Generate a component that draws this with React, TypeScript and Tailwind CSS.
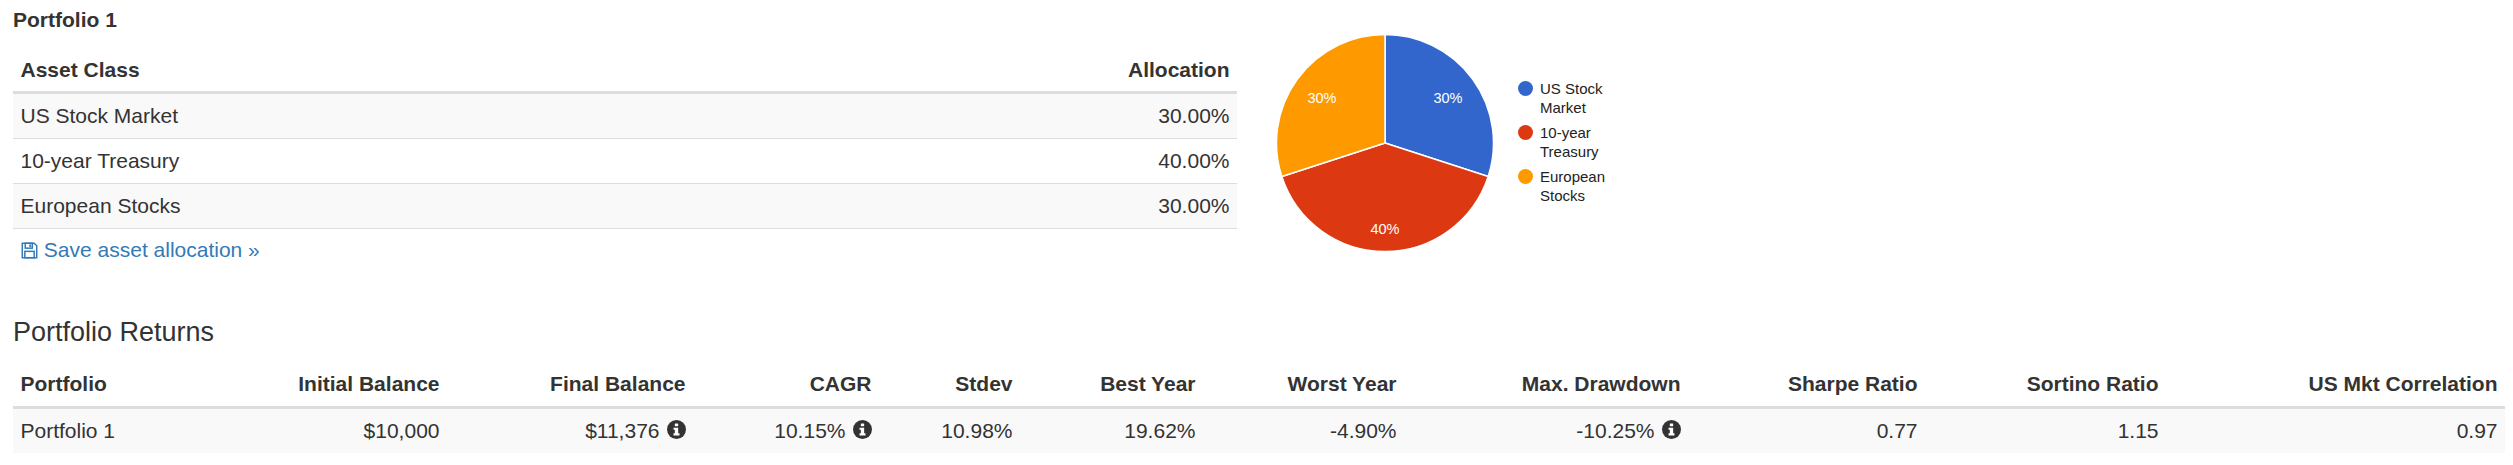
const allocation = [
  { name: 'US Stock Market', pct: '30.00%' },
  { name: '10-year Treasury', pct: '40.00%' },
  { name: 'European Stocks', pct: '30.00%' },
]

const legend = [
  { label: 'US Stock Market', color: 'bg-[#3366cc]' },
  { label: '10-year Treasury', color: 'bg-[#dc3912]' },
  { label: 'European Stocks', color: 'bg-[#ff9900]' },
]

const columns = [
  { title: 'Portfolio', width: 'w-[200px]', align: 'text-left' },
  { title: 'Initial Balance', width: 'w-[234px]', align: 'text-right' },
  { title: 'Final Balance', width: 'w-[246px]', align: 'text-right' },
  { title: 'CAGR', width: 'w-[186px]', align: 'text-right' },
  { title: 'Stdev', width: 'w-[141px]', align: 'text-right' },
  { title: 'Best Year', width: 'w-[183px]', align: 'text-right' },
  { title: 'Worst Year', width: 'w-[201px]', align: 'text-right' },
  { title: 'Max. Drawdown', width: 'w-[284px]', align: 'text-right' },
  { title: 'Sharpe Ratio', width: 'w-[237px]', align: 'text-right' },
  { title: 'Sortino Ratio', width: 'w-[241px]', align: 'text-right' },
  { title: 'US Mkt Correlation', width: 'w-auto', align: 'text-right' },
]

const results = [
  { value: 'Portfolio 1' },
  { value: '$10,000' },
  { value: '$11,376', info: true },
  { value: '10.15%', info: true },
  { value: '10.98%' },
  { value: '19.62%' },
  { value: '-4.90%' },
  { value: '-10.25%', info: true },
  { value: '0.77' },
  { value: '1.15' },
  { value: '0.97' },
]

function InfoIcon() {
  return (
    <svg viewBox="0 0 16 16" className="ml-[7px] inline-block h-[19px] w-[19px] align-[-1px]">
      <circle cx="8" cy="8" r="8" fill="#333" />
      <rect x="6.6" y="2.9" width="2.8" height="2.3" rx="0.4" fill="#fff" />
      <path d="M5.5 6.5H9.4V11.2H10.5V13H5.5V11.2H6.6V8.2H5.5Z" fill="#fff" />
    </svg>
  )
}

function FloppyIcon() {
  return (
    <svg viewBox="0 0 16 16" className="inline-block h-[17px] w-[17px] align-[-2px]" fill="none" stroke="#337ab7" strokeWidth="1.4">
      <path d="M1.2 1.2H12.4L14.8 3.6V14.8H1.2Z" />
      <rect x="4" y="1.2" width="6.6" height="4.6" />
      <rect x="7.8" y="2.3" width="1.6" height="2.4" fill="#337ab7" stroke="none" />
      <rect x="3.6" y="8.8" width="8.8" height="6" />
    </svg>
  )
}

function Pie() {
  return (
    <svg width="218" height="218" viewBox="0 0 218 218" className="shrink-0">
      <path d="M109 109L109 0.5A108.5 108.5 0 0 1 212.19 142.53Z" fill="#3366cc" stroke="#fff" strokeWidth="1.5" />
      <path d="M109 109L212.19 142.53A108.5 108.5 0 0 1 5.81 142.53Z" fill="#dc3912" stroke="#fff" strokeWidth="1.5" />
      <path d="M109 109L5.81 142.53A108.5 108.5 0 0 1 109 0.5Z" fill="#ff9900" stroke="#fff" strokeWidth="1.5" />
      <g fill="#fff" fontSize="14.5" textAnchor="middle" fontFamily="Liberation Sans, Arial, sans-serif">
        <text x="172" y="69">30%</text>
        <text x="109" y="200">40%</text>
        <text x="46" y="69">30%</text>
      </g>
    </svg>
  )
}

export default function App() {
  return (
    <div className="h-[465px] w-[2513px] bg-white pl-[13px] font-['Liberation_Sans',Arial,sans-serif] text-[21px] leading-[30px] text-[#333]">
      <div className="flex">
        <div className="w-[1224px] shrink-0">
          <div className="pt-[5px] font-bold">Portfolio 1</div>
          <table className="mt-[13px] w-full border-separate border-spacing-0">
            <thead>
              <tr>
                <th className="border-b-[3px] border-[#ddd] px-[7.5px] pt-[7px] pb-[6px] text-left font-bold">Asset Class</th>
                <th className="border-b-[3px] border-[#ddd] px-[7.5px] pt-[7px] pb-[6px] text-right font-bold">Allocation</th>
              </tr>
            </thead>
            <tbody>
              {allocation.map((row, i) => (
                <tr key={row.name} className={i % 2 === 0 ? 'bg-[#f9f9f9]' : 'bg-white'}>
                  <td className="border-b border-[#ddd] px-[7.5px] py-[7px]">{row.name}</td>
                  <td className="border-b border-[#ddd] px-[7.5px] py-[7px] text-right">{row.pct}</td>
                </tr>
              ))}
            </tbody>
          </table>
          <p className="pt-[6px] pl-[8px]">
            <a href="#" className="text-[#337ab7]">
              <FloppyIcon /> Save asset allocation »
            </a>
          </p>
        </div>
        <div className="flex items-start pt-[34px] pl-[39px]">
          <Pie />
          <div className="ml-[24px] mt-[45px] flex flex-col gap-[6px] text-[15px] leading-[19px] text-[#222]">
            {legend.map((item) => (
              <div key={item.label} className="flex items-start">
                <span className={`mt-[2px] h-[15px] w-[15px] shrink-0 rounded-full ${item.color}`} />
                <span className="ml-[7px] w-[72px]">{item.label}</span>
              </div>
            ))}
          </div>
        </div>
      </div>

      <h3 className="mt-[52px] text-[27px] leading-[30px] font-normal">Portfolio Returns</h3>
      <table className="mt-[15px] w-[2492px] table-fixed border-separate border-spacing-0">
        <thead>
          <tr>
            {columns.map((col) => (
              <th key={col.title} className={`${col.width} ${col.align} border-b-[3px] border-[#ddd] px-[7.5px] pt-[7px] pb-[7px] font-bold whitespace-nowrap`}>
                {col.title}
              </th>
            ))}
          </tr>
        </thead>
        <tbody>
          <tr className="bg-[#f9f9f9]">
            {results.map((cell, i) => (
              <td key={i} className={`${columns[i].align} px-[7.5px] py-[7px] whitespace-nowrap`}>
                {cell.value}
                {cell.info && <InfoIcon />}
              </td>
            ))}
          </tr>
        </tbody>
      </table>
    </div>
  )
}
